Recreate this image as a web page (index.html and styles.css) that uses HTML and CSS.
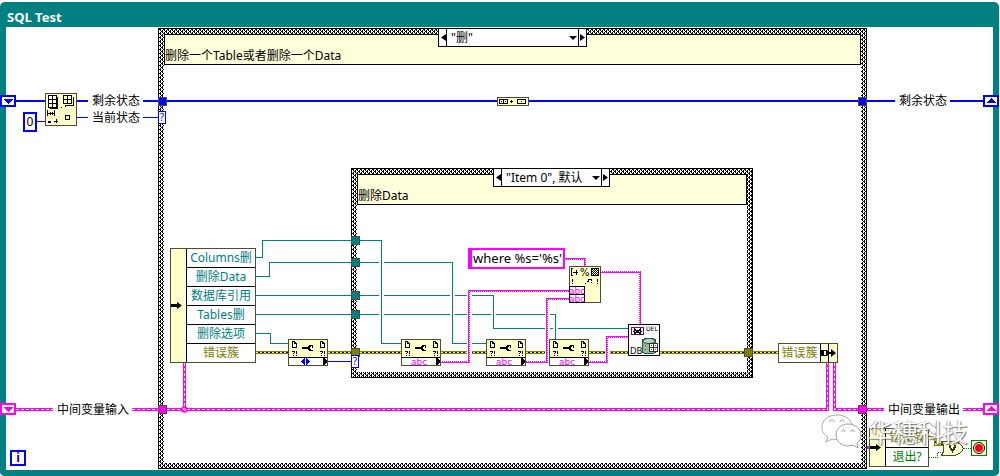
FILE: index.html
```html
<!DOCTYPE html>
<html lang="zh-CN">
<head>
<meta charset="utf-8">
<title>SQL Test</title>
<link rel="stylesheet" href="styles.css">
</head>
<body>
<div class="loop">
  <header class="loop-title">SQL Test</header>
  <main class="canvas"></main>

  <section class="case case-outer">
    <div class="case-note">删除一个Table或者删除一个Data</div>
    <div class="case-body"></div>
  </section>
  <section class="case case-inner">
    <div class="case-note">删除Data</div>
    <div class="case-body"></div>
  </section>

  <svg class="wires" width="1000" height="476" viewBox="0 0 1000 476" aria-hidden="true">
    <defs>
      <pattern id="str" width="2" height="2" patternUnits="userSpaceOnUse"><path fill="#f0f" d="M0 0h2v1H0zM0 1h1v1H0z"/></pattern>
      <symbol id="prop" viewBox="0 0 40 27">
        <path fill="#ffffcc" stroke="#4d4d33" d="M.5.5h39v26H.5z"/>
        <path fill="#fff" d="M1 19h38v7H1z"/>
        <path fill="#000" d="M1 18h38v1H1zM35 19h1l3 3v1l-3 3h-1z"/>
        <g fill="none" stroke="#000"><path d="M4.500 2.500h2l2 2v4h-4zM6.500 2.500v2h2M32.500 2.500h2l2 2v4h-4zM34.500 2.500v2h2"/>
        <path d="M4 12.500h2M6.500 12v2M5.500 14v1M5 16.500h1M8.500 12v3M8 16.500h1M32 12.500h2M34.500 12v2M33.500 14v1M33 16.500h1M36.500 12v3M36 16.500h1"/></g>
        <path fill="#000" d="M14 8h8v2h-8zM21 6h4v1h-2v1h-1v2h1v1h2v1h-4v-1h-1V7h1zM24 7h1v2h-1z"/>
      </symbol>
    </defs>

    <!-- object reference wires -->
    <g class="ref">
      <path d="M256 257.500h6.500v-17H381.500M256 276.500h13.500v-14H452.500M256 295.500H493.500M256 314.500H555.500M256 333.500h14.500v10H289M381 343.500h20M452 343.500h34M493 328.500h135"/>
    </g>
    <!-- error wires -->
    <g>
      <path class="err" d="M256 352.500H288M328 352.500h73M441 352.500h45M526 352.500h23M589 352.500h39M660 352.500h118M929 437.500h6.500v6.500h8"/>
      <path class="err-base" d="M256 352.500H288M328 352.500h73M441 352.500h45M526 352.500h23M589 352.500h39M660 352.500h118M929 437.500h6.500v6.500h8"/>
      <path class="err-core" d="M256 352.500H288M328 352.500h73M441 352.500h45M526 352.500h23M589 352.500h39M660 352.500h118M929 437.500h6.500v6.500h8"/>
    </g>
    <!-- gaps where vertical wires pass over -->
    <path class="gap" d="M381.500 243v97M452.500 265v75M493.500 298v27M555.500 317v20M469 293v66M547.500 301v57M607.500 339v19"/>
    <path class="ref" d="M381.500 240v104M452.500 262v82M493.500 295v34M555.500 314v26"/>
    <!-- string wires -->
    <g class="str">
      <path d="M565 259h20v7M441 362h28v-71h100M526 362h21v-63h22M589 362h18v-25h21M601 272h39v52"/>
    </g>
    <!-- array and enum wires -->
    <path class="arr" d="M16 101h29M77 101h11M143 101h354M529 101h366M950 101h33"/>
    <path class="enum" d="M37 121h8v1h-8zM77 117h11v1H77zM143 117h15v1h-15zM328 361h23v1h-23z"/>
    <!-- cluster wires -->
    <g>
      <path class="clu" d="M16 409.500h37M132 409.500H827V363M184.500 363v46M834.500 363v46.500H884M963 409.500h20M867 447.500h2"/>
      <path class="clu-core" d="M16 409.500h37M132 409.500H827V363M184.500 363v46M834.500 363v46.500H884M963 409.500h20"/>
      <circle cx="184.500" cy="409.500" r="2.500" fill="#fff" stroke="#f0f" stroke-width="1.500"/><path stroke="#f0f" d="M183 411l3-3"/>
    </g>
    <path class="bool" d="M929 457.500h8.500v-5h7M964 448.500h7"/>

    <!-- tunnels -->
    <g stroke="#4d4d33">
      <path fill="#00f" d="M158.500 97.500h8v8h-8zM858.500 97.500h8v8h-8z"/>
      <path fill="#008080" d="M351.500 236.500h8v8h-8zM351.500 258.500h8v8h-8zM351.500 291.500h8v8h-8zM351.500 310.500h8v8h-8z"/>
      <path fill="#808000" d="M351.500 348.500h8v8h-8zM744.500 348.500h8v8h-8z"/>
      <path fill="#f0f" d="M158.500 405.500h8v8h-8zM858.500 405.500h8v8h-8z"/>
    </g>

    <!-- shift registers -->
    <g fill="#ffffcc" stroke-width="2">
      <path stroke="#00f" d="M1 96h14v10H1zM984 96h14v10h-14z"/><path stroke="#f0f" d="M1 404h14v10H1zM984 404h14v10h-14z"/>
    </g>
    <path fill="#00f" d="M3 99h10l-5 5zM986 103h10l-5-5z"/><path fill="#f0f" d="M3 407h10l-5 5zM986 411h10l-5-5z"/>

    <!-- index array -->
    <g fill="none" stroke="#000">
      <path fill="#ffffcc" stroke="#4d4d33" d="M45.500 93.500h31v32h-31z"/>
      <path d="M48.500 95.500h8v12h-8zM52.500 95v12M48 99.500h9M48 103.500h9M57.500 97v12M50 108.500h8M63.500 95.500h8v8h-8zM67.500 95v9M63 99.500h9M73.500 97v9M65 105.500h9M61 107.500h1M65 106.500h1M47.500 110v6M54.500 110v6M48 113.500h6M50.500 112v3M52.500 112v3M65.500 115.500h4v4h-4zM54 121.500h4M56.500 119v4"/>
      <path fill="#000" d="M48.500 121.500h2v1h-2z"/>
    </g>
    <!-- build array -->
    <g fill="none" stroke="#000"><path fill="#ffffcc" stroke="#4d4d33" d="M497.500 97.500h31v8h-31z"/><path d="M499.500 99.500h8v4h-8zM503.500 99v5M501 101.500h1M505 101.500h1M510 101.500h3M511.500 100v3M517.500 99.500h8v4h-8zM521 101.500h1"/></g>

    <!-- property nodes -->
    <use href="#prop" x="288" y="339" width="40" height="27"/>
    <use href="#prop" x="401" y="339" width="40" height="27"/>
    <use href="#prop" x="486" y="339" width="40" height="27"/>
    <use href="#prop" x="549" y="339" width="40" height="27"/>
    <path fill="#00f" d="M301 361.500l4-4v8zM310 361.500l-4-4v8z"/>
    <g class="abc"><text x="411" y="365">abc</text><text x="496" y="365">abc</text><text x="559" y="365">abc</text></g>

    <!-- format into string -->
    <path fill="#ffffcc" stroke="#4d4d33" d="M569.500 266.500h31v36h-31z"/>
    <path fill="#fff" stroke="#000" d="M569.500 286.500h15v8h-15zM569.500 294.500h15v8h-15z"/>
    <g fill="none" stroke="#000"><path d="M573 268.500h-1.500v7h1.500M573 272.500h5M576.500 270v5M572.500 279v3M572.500 283v1M597.500 279v3M597.500 283v1"/><path d="M585 284l6-5M588 279.500h3.500v3" stroke-dasharray="2 1"/><path d="M591.500 268.500h7v7h-7z"/><path stroke-dasharray="1 1" d="M592 269.500h7M593 270.500h6M592 271.500h7M593 272.500h6M592 273.500h7M593 274.500h6"/></g>
    <text class="tiny" x="580" y="276">%</text>
    <g class="abc"><text x="569" y="294">abc</text><text x="569" y="302">abc</text></g>

    <!-- delete from database -->
    <path fill="#fff" stroke="#000" d="M628.500 324.500h31v31h-31z"/>
    <path fill="#fff" stroke="#808" d="M631.500 327.500h12v7h-12z"/>
    <path stroke="#000" stroke-width="2" d="M634 329l7 5M641 329l-7 5"/><path stroke="#000" d="M633 331.500h2M640 331.500h2"/>
    <text class="del" x="646" y="331">DEL</text><text class="db" x="630" y="354">DB</text>
    <path fill="#8fbc9a" stroke="#245b36" d="M642.500 341c0-4 13-4 13 0v10c0 4-13 4-13 0z"/>
    <ellipse cx="649" cy="341" rx="6" ry="2.500" fill="#b5d8bd" stroke="#245b36"/>
    <path fill="#fff" stroke="#333" d="M649.500 343.500h8v8h-8zM653.500 343v9M649 347.500h9"/>
    <path fill="#d22" d="M645 345h1v1h-1zM645 349h1v1h-1zM651 345h1v1h-1zM655 345h1v1h-1zM651 349h1v1h-1zM655 349h1v1h-1z"/>

    <!-- or gate and stop terminal -->
    <path fill="#ffffcc" stroke="#4d4d33" d="M941.500 441.500h11c5 0 9 3 11 7-2 4-6 7-11 7h-11c3-4 3-10 0-14z"/>
    <path fill="none" stroke="#333" stroke-width="2" d="M950 445v2l2.500 4 2.500-4v-2"/>
    <path fill="#ffffcc" stroke="#008000" stroke-width="1" d="M971.500 440.500h15v15h-15z"/>
    <circle cx="979" cy="448" r="5.500" fill="#fff" stroke="#000"/><circle cx="979" cy="448" r="4" fill="#f00"/>
  </svg>

  <span class="label l-rest-in">剩余状态</span>
  <span class="label l-now">当前状态</span>
  <span class="label l-rest-out">剩余状态</span>
  <span class="label l-mid-in">中间变量输入</span>
  <span class="label l-mid-out">中间变量输出</span>

  <div class="case-selector sel-outer">
    <button type="button" aria-label="上一个分支"><svg width="6" height="7"><path d="M6 0v7L1 3.500z"/></svg></button>
    <select aria-label="外层分支"><option>"删"</option></select>
    <button type="button" aria-label="下一个分支"><svg width="6" height="7"><path d="M0 0v7l5-3.500z"/></svg></button>
  </div>
  <div class="case-selector sel-inner">
    <button type="button" aria-label="上一个分支"><svg width="6" height="7"><path d="M6 0v7L1 3.500z"/></svg></button>
    <select aria-label="内层分支"><option>"Item 0", 默认</option></select>
    <button type="button" aria-label="下一个分支"><svg width="6" height="7"><path d="M0 0v7l5-3.500z"/></svg></button>
  </div>

  <div class="const num-const">0</div>
  <div class="const iteration">i</div>
  <div class="const str-const">where %s='%s'</div>
  <div class="query q-outer">?</div>
  <div class="query q-inner">?</div>

  <div class="bundle unbundle-main">
    <div class="grip"><svg width="11" height="7"><path d="M0 2h6V0l5 3.500L6 7V5H0z"/></svg></div>
    <ul>
      <li>Columns删</li><li>删除Data</li><li>数据库引用</li><li>Tables删</li><li>删除选项</li><li class="olive">错误簇</li>
    </ul>
  </div>
  <div class="bundle bundle-out">
    <ul><li class="olive">错误簇</li></ul>
    <div class="grip-split"><svg width="16" height="18"><path d="M7 0h1v18H7zM0 6h3v6H0zM3 6h3l1 1v4l-1 1H3v-1h2V7H3zM8 8h2V5l5 4-5 4v-3H8z"/></svg></div>
  </div>
  <div class="bundle unbundle-exit">
    <div class="grip"><svg width="11" height="7"><path d="M0 2h6V0l5 3.500L6 7V5H0z"/></svg></div>
    <ul><li class="olive">错误簇</li><li class="green">退出?</li></ul>
  </div>

  <div class="watermark">
    <svg width="44" height="38" viewBox="0 0 44 38" aria-hidden="true">
      <path fill="#fff" stroke="#999" d="M17 2C8 2 2 7 2 14c0 5 2 8 6 10l-2 5 6-3c9 2 20-1 20-12C32 7 26 2 17 2z"/>
      <path fill="#fff" stroke="#888" d="M28 11c-7 0-12 5-12 11s5 11 12 11l5-1 5 3-1-5c3-2 4-5 4-8 0-6-6-11-13-11z"/>
      <g fill="none" stroke="#888"><path d="M10 9c0-3 4-3 4 0M20 9c0-3 4-3 4 0M22 19c0-3 3-3 3 0M31 19c0-3 3-3 3 0"/></g>
    </svg>
    <span>华穗科技</span>
  </div>
</div>
</body>
</html>
```
FILE: styles.css
```css
* { box-sizing: border-box; }

body {
  margin: 0;
  background: #fff;
  font: 12px/18px "Noto Sans", "Noto Sans CJK SC", sans-serif;
  color: #000;
}

.loop {
  position: relative;
  display: flex;
  flex-direction: column;
  min-width: 1000px;
  min-height: 100vh;
  padding: 2px 1px 0 0;
}

.loop-title {
  height: 25px;
  padding: 6px 7px 0;
  border-radius: 5px 5px 0 0;
  background: #008080;
  color: #fff;
  font-size: 13px;
  font-weight: 700;
  line-height: 18px;
}

.canvas {
  flex: 1;
  border: 6px solid #008080;
  border-top: 0;
  border-radius: 0 0 5px 5px;
  background: #fff;
}

.wires { position: absolute; left: 0; top: 0; }
.wires path, .wires use { shape-rendering: crispEdges; }

.ref { fill: none; stroke: #008080; }
.gap { fill: none; stroke: #fff; stroke-width: 5px; }
.err { fill: none; stroke: #808000; stroke-width: 3px; }
.err-base { fill: none; stroke: #000; }
.err-core { fill: none; stroke: #ffff00; stroke-dasharray: 2 2; }
.str { fill: none; stroke: url(#str); stroke-width: 2px; }
.arr { fill: none; stroke: #00f; stroke-width: 2px; }
.enum { fill: #00f; }
.clu { fill: none; stroke: #f0f; stroke-width: 3px; }
.clu-core { fill: none; stroke: #fff; stroke-width: 1px; stroke-dasharray: 3 2; }
.bool { fill: none; stroke: #008000; stroke-dasharray: 1 1; }
.abc { fill: #f0f; font: 9px "DejaVu Sans", sans-serif; }
.tiny { font: 10px "DejaVu Sans", sans-serif; }
.del { font: 6px "DejaVu Sans", sans-serif; }
.db { font: 9px "Noto Sans", sans-serif; }

.case {
  position: absolute;
  display: flex;
  flex-direction: column;
  padding: 5px;
  border: 1px solid #000;
  background: #fff url("data:image/svg+xml,%3Csvg xmlns='http://www.w3.org/2000/svg' width='4' height='4' shape-rendering='crispEdges'%3E%3Cpath d='M0 0h2v1H0zM1 1h1v1H1zM3 1h1v1H3zM2 2h2v1H2zM1 3h1v1H1zM3 3h1v1H3z'/%3E%3C/svg%3E");
}
.case-outer { left: 158px; top: 28px; width: 709px; height: 441px; }
.case-inner { left: 351px; top: 168px; width: 402px; height: 210px; }
.case-note {
  height: 31px;
  padding: 12px 0 0;
  border: 1px solid #000;
  background: #ffffd9;
}
.case-body { flex: 1; background: #fff; }

.case-selector {
  position: absolute;
  display: flex;
  height: 19px;
  border: 1px solid #000;
  background: #fff;
}
.sel-outer { left: 438px; top: 28px; width: 149px; }
.sel-inner { left: 493px; top: 168px; width: 117px; }
.case-selector button {
  display: flex;
  align-items: center;
  justify-content: center;
  width: 7px;
  padding: 0;
  border: 0;
  background: #fff;
}
.case-selector select {
  flex: 1;
  min-width: 0;
  padding: 0 0 0 4px;
  border: solid #000;
  border-width: 0 1px;
  border-radius: 0;
  appearance: none;
  background: #fff url("data:image/svg+xml,%3Csvg xmlns='http://www.w3.org/2000/svg' width='8' height='4'%3E%3Cpath d='M0 0h8L4 4z'/%3E%3C/svg%3E") no-repeat right 1px center;
  color: #000;
  font: inherit;
  line-height: 17px;
}

.label { position: absolute; white-space: nowrap; }
.l-rest-in { left: 92px; top: 92px; }
.l-now { left: 92px; top: 109px; }
.l-rest-out { left: 899px; top: 92px; }
.l-mid-in { left: 57px; top: 401px; }
.l-mid-out { left: 888px; top: 401px; }

.const {
  position: absolute;
  border: 2px solid #00f;
  background: #fff;
  text-align: center;
  white-space: nowrap;
}
.num-const { left: 23px; top: 112px; width: 14px; height: 20px; line-height: 16px; }
.iteration {
  left: 10px;
  top: 450px;
  width: 16px;
  height: 16px;
  background: #ffffcc;
  color: #00f;
  font-weight: 700;
  line-height: 12px;
}
.str-const {
  left: 468px;
  top: 248px;
  width: 97px;
  height: 21px;
  border-color: #f0f;
  border-left-width: 4px;
  font-size: 13px;
  line-height: 17px;
}

.query {
  position: absolute;
  width: 8px;
  height: 13px;
  border: 1px solid #00f;
  background: #fff;
  color: #00f;
  font-size: 10px;
  line-height: 11px;
  text-align: center;
}
.q-outer { left: 158px; top: 111px; }
.q-inner { left: 351px; top: 355px; }

.bundle {
  position: absolute;
  display: flex;
  border: 1px solid #4d4d33;
  background: #fff;
  white-space: nowrap;
}
.bundle ul {
  flex: 1;
  margin: 0;
  padding: 0;
  list-style: none;
  color: #008080;
  text-align: center;
}
.bundle li { height: 18px; }
.bundle li + li { height: 19px; border-top: 1px solid #000; }
.bundle .olive { color: #808000; }
.bundle .green { color: #008000; }
.grip {
  display: flex;
  align-items: center;
  width: 16px;
  border-right: 1px solid #000;
  background: #ffffcc;
}
.grip-split {
  display: flex;
  align-items: center;
  width: 17px;
  border-left: 1px solid #000;
  background: #ffffcc;
}
.unbundle-main { left: 170px; top: 248px; width: 86px; }
.bundle-out { left: 778px; top: 343px; width: 60px; height: 20px; }
.unbundle-exit { left: 869px; top: 428px; width: 60px; }

.watermark {
  position: absolute;
  left: 820px;
  top: 413px;
  display: flex;
  align-items: center;
  gap: 4px;
  opacity: 0.8;
  color: #fff;
  font-size: 25px;
  line-height: 38px;
  text-shadow: 1px 1px 1px #555, -1px 0 1px #999;
}
```
